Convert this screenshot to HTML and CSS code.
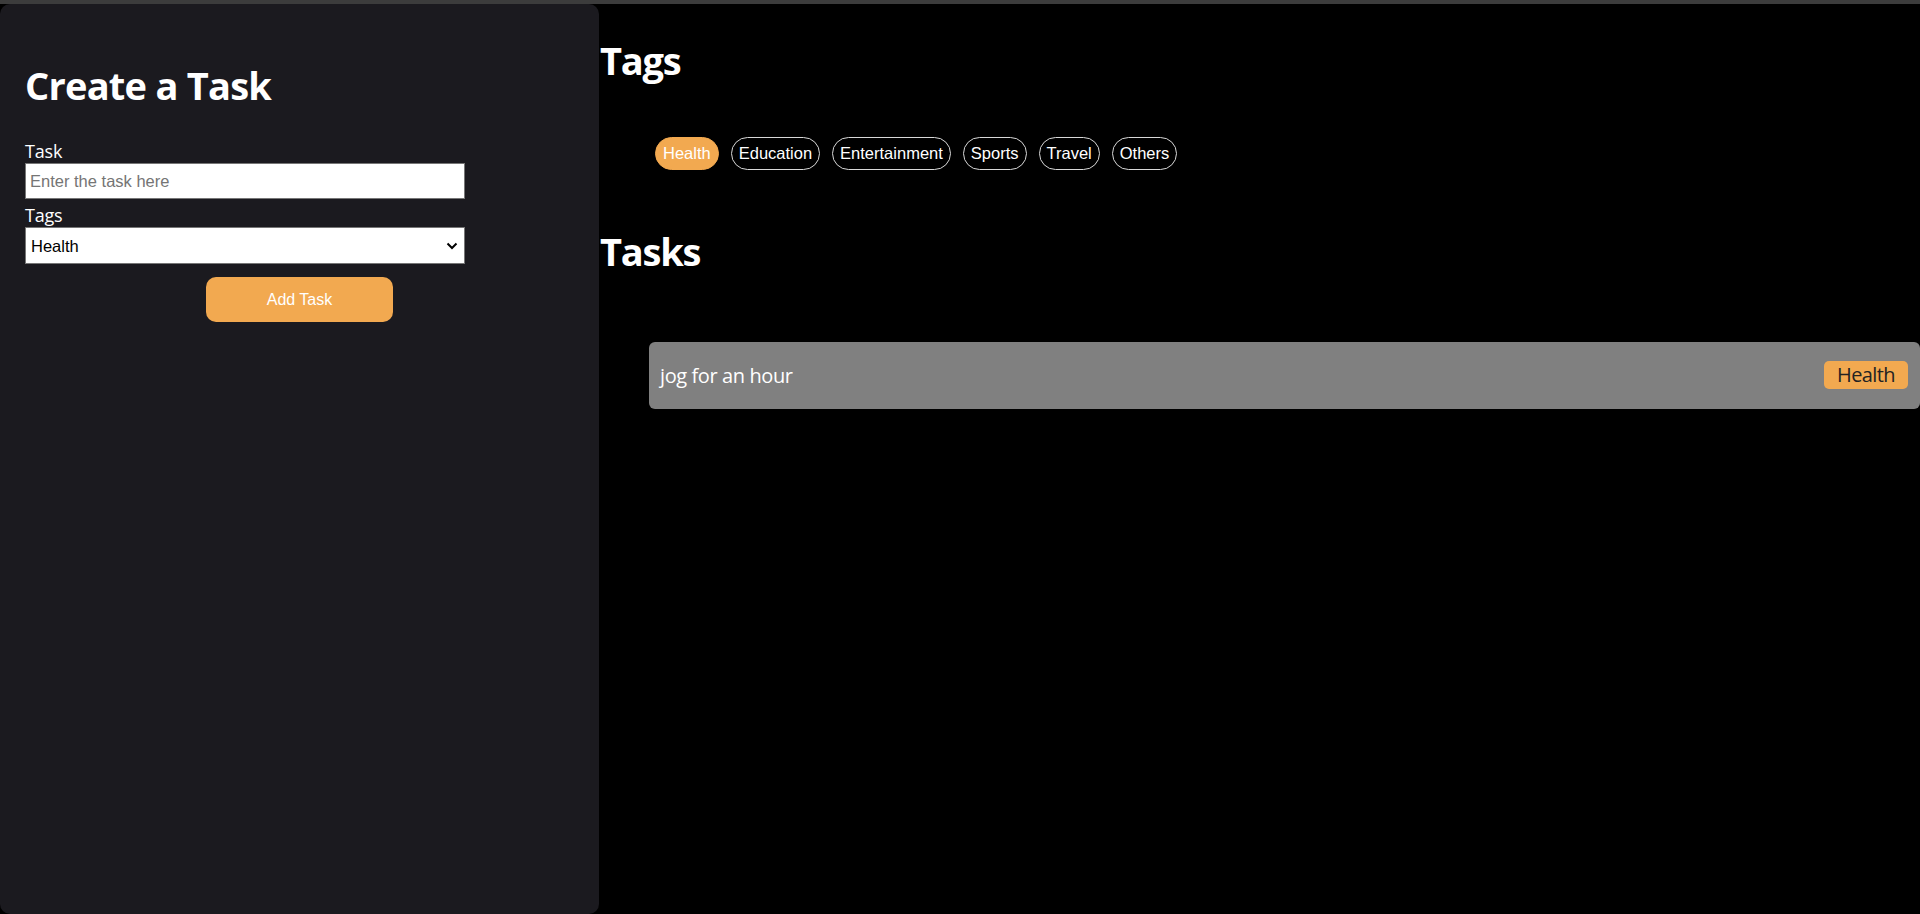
FILE: index.html
```html
<!DOCTYPE html>
<html lang="en">
<head>
<meta charset="utf-8">
<title>Task Manager</title>
<link rel="stylesheet" href="styles.css">
</head>
<body>
<div class="topbar"></div>
<div class="app">
  <aside class="sidebar">
    <h1 class="title">Create a Task</h1>
    <form class="task-form">
      <label class="field-label" for="task">Task</label>
      <input class="field-input" id="task" type="text" placeholder="Enter the task here">
      <label class="field-label" for="tag">Tags</label>
      <div class="select-wrap">
        <select class="field-select" id="tag">
          <option>Health</option>
          <option>Education</option>
          <option>Entertainment</option>
          <option>Sports</option>
          <option>Travel</option>
          <option>Others</option>
        </select>
        <svg class="select-arrow" width="12" height="8" viewBox="0 0 12 8" aria-hidden="true"><path d="M1.5 1.5 L6 6 L10.5 1.5" fill="none" stroke="#000" stroke-width="2"/></svg>
      </div>
      <button class="add-btn" type="button">Add Task</button>
    </form>
  </aside>
  <main class="main">
    <h1 class="section-title">Tags</h1>
    <div class="tag-list">
      <span class="pill pill-active">Health</span>
      <span class="pill">Education</span>
      <span class="pill">Entertainment</span>
      <span class="pill">Sports</span>
      <span class="pill">Travel</span>
      <span class="pill">Others</span>
    </div>
    <h1 class="section-title tasks-title">Tasks</h1>
    <div class="task-list">
      <div class="task-card">
        <span class="task-text">jog for an hour</span>
        <span class="task-badge">Health</span>
      </div>
    </div>
  </main>
</div>
</body>
</html>
```
FILE: styles.css
```css
* { box-sizing: border-box; }
html, body {
  margin: 0;
  padding: 0;
  height: 100%;
  background: #000;
  overflow: hidden;
}
body {
  font-family: "Open Sans", "Noto Sans", sans-serif;
  color: #fff;
}
.topbar {
  height: 4px;
  background: #3c3c3c;
}
.app {
  display: flex;
  height: calc(100% - 4px);
}
.sidebar {
  width: 599px;
  flex: none;
  background: #1b1a1f;
  border-radius: 10px;
  padding: 0 25px;
}
.title {
  margin: 56.5px 0 30.5px;
  font-size: 38px;
  line-height: 48px;
  font-weight: 700;
  letter-spacing: -0.75px;
}
.task-form {
  display: flex;
  flex-direction: column;
}
.field-label {
  display: block;
  font-size: 18px;
  line-height: 24px;
  letter-spacing: -0.2px;
}
.field-input {
  width: 440px;
  height: 36px;
  margin: 0 0 4px;
  border: 1px solid #767676;
  padding: 0 4px;
  font-family: "Liberation Sans", Arial, sans-serif;
  font-size: 16.5px;
  color: #000;
  background: #fff;
}
.field-input::placeholder { color: #757575; }
.select-wrap {
  position: relative;
  width: 440px;
  height: 37px;
}
.field-select {
  appearance: none;
  -webkit-appearance: none;
  width: 100%;
  height: 100%;
  margin: 0;
  border: 1px solid #767676;
  border-radius: 0;
  padding: 0 30px 0 5px;
  font-family: "Liberation Sans", Arial, sans-serif;
  font-size: 16.5px;
  color: #000;
  background: #fff;
}
.select-arrow {
  position: absolute;
  right: 7px;
  top: 15px;
  pointer-events: none;
}
.add-btn {
  align-self: center;
  width: 187px;
  height: 45px;
  margin-top: 13px;
  border: none;
  border-radius: 10px;
  background: #f2a950;
  color: #fff;
  font-family: "Liberation Sans", Arial, sans-serif;
  font-size: 16px;
}
.main {
  flex: 1;
  min-width: 0;
  display: flex;
  flex-direction: column;
  padding-left: 1px;
}
.section-title {
  margin: 31.5px 0 0;
  font-size: 38px;
  line-height: 48px;
  font-weight: 700;
  letter-spacing: -1.2px;
}
.tag-list {
  display: flex;
  gap: 12px;
  margin: 53px 0 0 55px;
}
.pill {
  font-family: "Liberation Sans", Arial, sans-serif;
  font-size: 16.5px;
  line-height: 19px;
  padding: 6px 7px;
  border: 1px solid #d8d8d8;
  border-radius: 17px;
  color: #fff;
}
.pill-active {
  background: #f2a950;
  border-color: #f2a950;
}
.tasks-title {
  margin-top: 57px;
}
.task-list {
  margin: 67px 0 0 49px;
}
.task-card {
  display: flex;
  align-items: center;
  justify-content: space-between;
  height: 67px;
  padding: 0 12px 0 11px;
  background: #808080;
  border-radius: 6px;
}
.task-text {
  font-size: 20px;
  letter-spacing: -0.4px;
  color: #fff;
}
.task-badge {
  font-size: 20px;
  line-height: 28px;
  letter-spacing: -0.6px;
  padding: 0 13px;
  background: #f2a950;
  color: #222;
  border-radius: 5px;
}
```
